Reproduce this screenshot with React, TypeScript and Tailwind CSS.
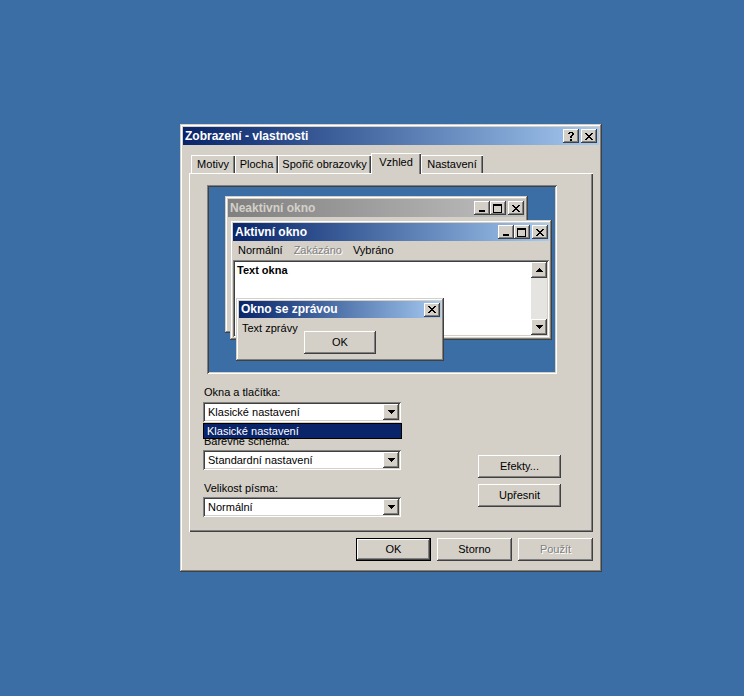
import React from "react";

// classic 3D edges
const frame =
  "shadow-[inset_-1px_-1px_0_#404040,inset_1px_1px_0_#d4d0c8,inset_-2px_-2px_0_#808080,inset_2px_2px_0_#ffffff]";
const btn =
  "shadow-[inset_-1px_-1px_0_#404040,inset_1px_1px_0_#ffffff,inset_-2px_-2px_0_#808080]";
const sunken =
  "shadow-[inset_1px_1px_0_#808080,inset_-1px_-1px_0_#ffffff,inset_2px_2px_0_#404040,inset_-2px_-2px_0_#d4d0c8]";
const panel =
  "shadow-[inset_1px_1px_0_#ffffff,inset_-1px_-1px_0_#404040,inset_-2px_-2px_0_#808080]";

const CLOSE = [
  "##....##",
  ".##..##.",
  "..####..",
  "...##...",
  "..####..",
  ".##..##.",
  "##....##",
];
const MIN = ["......", "......", "......", "......", "......", "######", "######"];
const MAX = [
  "#########",
  "#########",
  "#.......#",
  "#.......#",
  "#.......#",
  "#.......#",
  "#.......#",
  "#.......#",
  "#########",
];
const HELP = [
  ".####.",
  "##..##",
  "....##",
  "...##.",
  "..##..",
  "..##..",
  "......",
  "..##..",
  "..##..",
];
const DOWN = ["#######", ".#####.", "..###..", "...#..."];
const UP = ["...#...", "..###..", ".#####.", "#######"];

function Pix({ rows }: { rows: string[] }) {
  const w = rows[0].length;
  const h = rows.length;
  return (
    <svg width={w} height={h} viewBox={`0 0 ${w} ${h}`} shapeRendering="crispEdges">
      {rows.flatMap((r, y) =>
        r.split("").map((c, x) =>
          c === "#" ? <rect key={`${x}-${y}`} x={x} y={y} width={1} height={1} fill="#000" /> : null
        )
      )}
    </svg>
  );
}

function CapBtn({ rows, className = "" }: { rows: string[]; className?: string }) {
  return (
    <div className={`w-[16px] h-[14px] bg-[#d4d0c8] flex items-center justify-center pr-[1px] ${btn} ${className}`}>
      <Pix rows={rows} />
    </div>
  );
}

function Tab({ label, w, active }: { label: string; w: string; active?: boolean }) {
  if (active)
    return (
      <div
        className={`${w} h-[21px] -mb-[1px] relative z-10 bg-[#d4d0c8] flex items-center justify-center pb-[3px] shadow-[inset_1px_1px_0_#ffffff,inset_-1px_0_0_#404040,inset_-2px_0_0_#808080]`}
      >
        {label}
      </div>
    );
  return (
    <div
      className={`${w} h-[18px] bg-[#d4d0c8] flex items-center justify-center shadow-[inset_1px_1px_0_#ffffff,inset_-1px_0_0_#404040,inset_-2px_0_0_#808080]`}
    >
      {label}
    </div>
  );
}

function Select({ value }: { value: string }) {
  return (
    <div className={`h-[20px] w-[198px] bg-white flex items-center pl-[5px] pr-[2px] ${sunken}`}>
      <span className="flex-1">{value}</span>
      <div className={`w-[16px] h-[16px] bg-[#d4d0c8] flex items-center justify-center ${btn}`}>
        <Pix rows={DOWN} />
      </div>
    </div>
  );
}

function PushBtn({ label, w, def, disabled }: { label: string; w: string; def?: boolean; disabled?: boolean }) {
  const face = (
    <div
      className={`w-full h-full bg-[#d4d0c8] flex items-center justify-center ${btn} ${
        disabled ? "text-[#808080] [text-shadow:1px_1px_0_#ffffff]" : ""
      }`}
    >
      {label}
    </div>
  );
  if (def) return <div className={`${w} h-[23px] border border-black`}>{face}</div>;
  return <div className={`${w} h-[23px]`}>{face}</div>;
}

export default function App() {
  return (
    <div className="w-[744px] h-[696px] bg-[#3a6ea5] relative overflow-hidden font-['Liberation_Sans',Arial,sans-serif] text-[11px] leading-[13px] text-black">
      <div className={`absolute left-[180px] top-[124px] w-[422px] h-[448px] bg-[#d4d0c8] p-[3px] flex flex-col ${frame}`}>
        {/* title bar */}
        <div className="h-[18px] flex items-center bg-linear-to-r from-[#0a246a] to-[#a6caf0] pl-[2px] pr-[2px]">
          <span className="flex-1 text-white font-bold text-[12px]">Zobrazení - vlastnosti</span>
          <CapBtn rows={HELP} />
          <CapBtn rows={CLOSE} className="ml-[2px]" />
        </div>

        {/* tabs */}
        <div className="mt-[10px] ml-[8px] h-[18px] flex items-end">
          <Tab label="Motivy" w="w-[44px]" />
          <Tab label="Plocha" w="w-[43px]" />
          <Tab label="Spořič obrazovky" w="w-[93px]" />
          <Tab label="Vzhled" w="w-[50px]" active />
          <Tab label="Nastavení" w="w-[62px]" />
        </div>

        {/* tab panel */}
        <div className={`mx-[6px] h-[359px] flex flex-col ${panel}`}>
          {/* preview */}
          <div className={`mt-[12px] ml-[18px] w-[350px] h-[189px] relative bg-[#3a6ea5] ${sunken}`}>
            {/* inactive window */}
            <div className={`absolute left-[18px] top-[11px] w-[303px] h-[137px] bg-[#d4d0c8] p-[3px] ${frame}`}>
              <div className="h-[18px] flex items-center bg-linear-to-r from-[#808080] to-[#c0c0c0] pl-[2px] pr-[1px]">
                <span className="flex-1 font-bold text-[12px] text-[#d4d0c8]">Neaktivní okno</span>
                <CapBtn rows={MIN} />
                <CapBtn rows={MAX} />
                <CapBtn rows={CLOSE} className="ml-[2px]" />
              </div>
            </div>

            {/* active window */}
            <div className={`absolute left-[23px] top-[35px] w-[322px] h-[120px] bg-[#d4d0c8] p-[3px] flex flex-col ${frame}`}>
              <div className="h-[18px] flex items-center bg-linear-to-r from-[#0a246a] to-[#a6caf0] pl-[2px] pr-[1px]">
                <span className="flex-1 font-bold text-[12px] text-white">Aktivní okno</span>
                <CapBtn rows={MIN} />
                <CapBtn rows={MAX} />
                <CapBtn rows={CLOSE} className="ml-[2px]" />
              </div>
              <div className="h-[18px] flex items-center gap-[11px] pl-[5px]">
                <span>Normální</span>
                <span className="text-[#808080] [text-shadow:1px_1px_0_#ffffff]">Zakázáno</span>
                <span>Vybráno</span>
              </div>
              <div className={`mt-[1px] h-[77px] bg-white p-[2px] flex ${sunken}`}>
                <div className="flex-1 pl-[2px] pt-[2px] font-bold">Text okna</div>
                <div className="w-[16px] flex flex-col bg-[#e6e4e0]">
                  <div className={`h-[16px] bg-[#d4d0c8] flex items-center justify-center ${btn}`}>
                    <Pix rows={UP} />
                  </div>
                  <div className="flex-1" />
                  <div className={`h-[16px] bg-[#d4d0c8] flex items-center justify-center ${btn}`}>
                    <Pix rows={DOWN} />
                  </div>
                </div>
              </div>
            </div>

            {/* message box */}
            <div className={`absolute left-[29px] top-[113px] w-[208px] h-[63px] bg-[#d4d0c8] p-[3px] flex flex-col ${frame}`}>
              <div className="h-[17px] flex items-center bg-linear-to-r from-[#0a246a] to-[#a6caf0] pl-[2px] pr-[1px]">
                <span className="flex-1 font-bold text-[12px] text-white">Okno se zprávou</span>
                <CapBtn rows={CLOSE} />
              </div>
              <div className="flex items-start">
                <span className="w-[65px] pl-[3px] pt-[4px]">Text zprávy</span>
                <div className="mt-[13px]">
                  <PushBtn label="OK" w="w-[72px]" />
                </div>
              </div>
            </div>
          </div>

          {/* settings */}
          <div className="flex">
            <div className="ml-[14px] mt-[12px] w-[198px] relative flex flex-col">
              <span className="pl-[1px]">Okna a tlačítka:</span>
              <div className="mt-[3px]">
                <Select value="Klasické nastavení" />
              </div>
              <span className="pl-[1px] mt-[13px]">Barevné schéma:</span>
              <div className="mt-[2px]">
                <Select value="Standardní nastavení" />
              </div>
              <span className="pl-[1px] mt-[12px]">Velikost písma:</span>
              <div className="mt-[2px]">
                <Select value="Normální" />
              </div>
              {/* open list */}
              <div className="absolute left-0 top-[37px] w-[199px] h-[16px] border border-black bg-white">
                <div className="h-full bg-[#0a246a] text-white pl-[3px] flex items-center">Klasické nastavení</div>
              </div>
            </div>
            <div className="ml-[77px] mt-[81px] flex flex-col gap-[6px]">
              <PushBtn label="Efekty..." w="w-[83px]" />
              <PushBtn label="Upřesnit" w="w-[83px]" />
            </div>
          </div>
        </div>

        {/* dialog buttons */}
        <div className="mt-[6px] pr-[6px] flex justify-end gap-[6px]">
          <PushBtn label="OK" w="w-[75px]" def />
          <PushBtn label="Storno" w="w-[75px]" />
          <PushBtn label="Použít" w="w-[75px]" disabled />
        </div>
      </div>
    </div>
  );
}
